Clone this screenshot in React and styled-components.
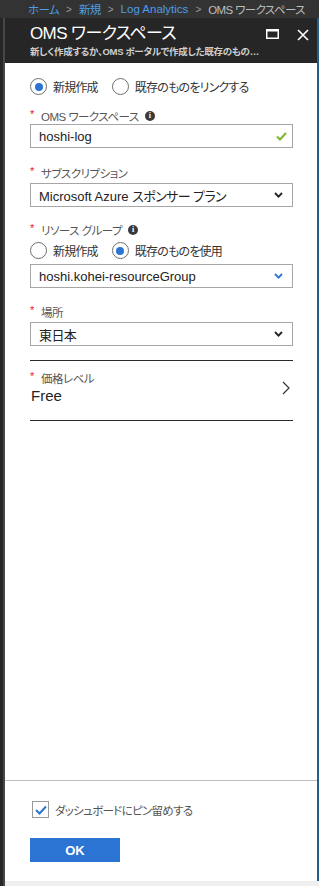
import React from "react";
import styled, { createGlobalStyle } from "styled-components";

const GlobalStyle = createGlobalStyle`
	html, body {
		margin: 0;
		padding: 0;
		background: #ffffff;
	}
	body {
		font-family: "Liberation Sans", "Noto Sans CJK JP", sans-serif;
		font-feature-settings: "palt";
	}
	* {
		box-sizing: border-box;
	}
`;

const Page = styled.div`
	width: 319px;
	height: 886px;
	display: flex;
	flex-direction: column;
	overflow: hidden;
	background: #f0f0f0;
`;

const Breadcrumb = styled.div`
	height: 18px;
	flex: none;
	display: flex;
	align-items: center;
	gap: 7px;
	padding-left: 28px;
	background: #333333;
	font-size: 11.5px;
	white-space: nowrap;
	overflow: hidden;
	color: #bdbdbd;
`;

const Crumb = styled.span`
	color: ${(p) => (p.$current ? "#bdbdbd" : "#4d9de8")};
	letter-spacing: ${(p) => (p.$jp ? "-0.6px" : "0")};
`;

const Sep = styled.span`
	color: #9a9a9a;
	font-size: 10px;
`;

const Body = styled.div`
	flex: 1;
	display: flex;
	min-height: 0;
`;

const LeftRail = styled.div`
	width: 5px;
	flex: none;
	background: #262626;
	border-right: 2px solid #474747;
`;

const Column = styled.div`
	flex: 1;
	min-width: 0;
	display: flex;
	flex-direction: column;
`;

const Blade = styled.div`
	flex: 1;
	display: flex;
	background: #ffffff;
`;

const BladeInner = styled.div`
	flex: 1;
	min-width: 0;
	display: flex;
	flex-direction: column;
`;

const BlueEdge = styled.div`
	width: 2px;
	flex: none;
	background: #245f8c;
`;

const BottomStrip = styled.div`
	height: 5px;
	flex: none;
	background: #efefef;
`;

const Header = styled.div`
	height: 45px;
	flex: none;
	background: #262626;
	display: flex;
	align-items: flex-start;
	padding: 5px 8px 0 25px;
`;

const TitleBlock = styled.div`
	flex: 1;
	min-width: 0;
`;

const Title = styled.div`
	color: #ffffff;
	font-size: 17px;
	line-height: 22px;
	letter-spacing: -0.6px;
`;

const Subtitle = styled.div`
	color: #cfcfcf;
	font-size: 9.5px;
	line-height: 14px;
	font-weight: 700;
	letter-spacing: -0.3px;
	white-space: nowrap;
	overflow: hidden;
`;

const HeaderIcons = styled.div`
	display: flex;
	gap: 18px;
	padding-top: 6px;
`;

const Content = styled.div`
	flex: 1;
	padding: 15px 24px 0 25px;
	display: flex;
	flex-direction: column;
`;

const RadioRow = styled.div`
	display: flex;
	align-items: center;
	gap: 14px;
	height: 17px;
	margin-bottom: ${(p) => p.$mb || 0}px;
`;

const RadioOption = styled.label`
	display: flex;
	align-items: center;
	gap: 6px;
	font-size: 12px;
	letter-spacing: -0.8px;
	color: #333333;
`;

const RadioCircle = styled.span`
	width: 17px;
	height: 17px;
	border-radius: 50%;
	border: 1px solid #6e6e6e;
	display: flex;
	align-items: center;
	justify-content: center;
	background: #fff;
	&::after {
		content: "";
		width: 8px;
		height: 8px;
		border-radius: 50%;
		background: ${(p) => (p.$on ? "#2b74d4" : "transparent")};
	}
`;

const Label = styled.div`
	display: flex;
	align-items: center;
	height: 16px;
	font-size: 11.5px;
	letter-spacing: -0.5px;
	color: #555555;
	margin-bottom: ${(p) => p.$mb ?? 0}px;
`;

const Star = styled.span`
	color: #e81123;
	font-size: 11px;
	width: 11px;
	align-self: flex-start;
	line-height: 12px;
`;

const Info = styled.span`
	width: 10px;
	height: 10px;
	border-radius: 50%;
	background: #3a3a3a;
	color: #fff;
	font-size: 8px;
	font-weight: 700;
	line-height: 10px;
	text-align: center;
	letter-spacing: 0;
	font-family: "Liberation Serif", serif;
	margin-left: 6px;
`;

const Field = styled.div`
	height: 24px;
	flex: none;
	border: 1px solid #a6a6a6;
	display: flex;
	align-items: center;
	padding: 0 9px 0 8px;
	font-size: 13px;
	color: #222222;
	margin-bottom: ${(p) => p.$mb || 0}px;
`;

const FieldText = styled.span`
	flex: 1;
	white-space: nowrap;
	overflow: hidden;
`;

const Jp = styled.span`
	letter-spacing: -0.6px;
`;

const Rule = styled.div`
	height: 1px;
	flex: none;
	background: #2a2a2a;
`;

const PriceRow = styled.div`
	display: flex;
	align-items: center;
	padding: 9px 0 14px;
`;

const PriceText = styled.div`
	flex: 1;
`;

const PriceValue = styled.div`
	font-size: 15px;
	line-height: 20px;
	color: #222;
	padding-left: 1px;
`;

const Footer = styled.div`
	flex: none;
	border-top: 1px solid #bdbdbd;
	padding: 20px 0 19px 25px;
`;

const CheckRow = styled.label`
	display: flex;
	align-items: center;
	gap: 6px;
	padding-left: 2px;
	font-size: 11.5px;
	letter-spacing: -0.7px;
	color: #555555;
	margin-bottom: 20px;
`;

const CheckBox = styled.span`
	width: 17px;
	height: 17px;
	border: 1px solid #9a9a9a;
	display: flex;
	align-items: center;
	justify-content: center;
`;

const OkButton = styled.button`
	width: 90px;
	height: 24px;
	border: none;
	background: #2b74d4;
	color: #ffffff;
	font-family: "Liberation Sans", sans-serif;
	font-weight: 700;
	font-size: 13px;
	padding: 0;
`;

const Chevron = ({ color = "#222" }) => (
	<svg width="9" height="6" viewBox="0 0 9 6">
		<path d="M1 1 L4.5 4.6 L8 1" fill="none" stroke={color} strokeWidth="1.8" />
	</svg>
);

export default function App() {
	return (
		<>
			<GlobalStyle />
			<Page>
				<Breadcrumb>
					<Crumb $jp>ホーム</Crumb>
					<Sep>&gt;</Sep>
					<Crumb $jp>新規</Crumb>
					<Sep>&gt;</Sep>
					<Crumb>Log Analytics</Crumb>
					<Sep>&gt;</Sep>
					<Crumb $current $jp>OMS ワークスペース</Crumb>
				</Breadcrumb>
				<Body>
					<LeftRail />
					<Column>
						<Blade>
							<BladeInner>
								<Header>
									<TitleBlock>
										<Title>OMS ワークスペース</Title>
										<Subtitle>新しく作成するか、OMS ポータルで作成した既存のもの…</Subtitle>
									</TitleBlock>
									<HeaderIcons>
										<svg width="13" height="10" viewBox="0 0 13 10">
											<rect x="0.75" y="1" width="11.5" height="8.25" fill="none" stroke="#fff" strokeWidth="1.5" />
											<rect x="0" y="0" width="13" height="2.5" fill="#fff" />
										</svg>
										<svg width="12" height="12" viewBox="0 0 12 12">
											<path d="M1 1 L11 11 M11 1 L1 11" stroke="#fff" strokeWidth="1.6" />
										</svg>
									</HeaderIcons>
								</Header>
								<Content>
									<RadioRow $mb={13}>
										<RadioOption><RadioCircle $on />新規作成</RadioOption>
										<RadioOption><RadioCircle />既存のものをリンクする</RadioOption>
									</RadioRow>

									<Label><Star>*</Star>OMS ワークスペース<Info>i</Info></Label>
									<Field $mb={17}>
										<FieldText>hoshi-log</FieldText>
										<svg width="11" height="9" viewBox="0 0 11 9" style={{ marginRight: -4 }}>
											<path d="M1 4.5 L4 7.5 L10 1" fill="none" stroke="#7ab929" strokeWidth="2" />
										</svg>
									</Field>

									<Label $mb={2}><Star>*</Star>サブスクリプション</Label>
									<Field $mb={15}>
										<FieldText>Microsoft Azure <Jp>スポンサー プラン</Jp></FieldText>
										<Chevron />
									</Field>

									<Label $mb={4}><Star>*</Star>リソース グループ<Info>i</Info></Label>
									<RadioRow $mb={5}>
										<RadioOption><RadioCircle />新規作成</RadioOption>
										<RadioOption><RadioCircle $on />既存のものを使用</RadioOption>
									</RadioRow>
									<Field $mb={16}>
										<FieldText>hoshi.kohei-resourceGroup</FieldText>
										<Chevron color="#2b74d4" />
									</Field>

									<Label $mb={2}><Star>*</Star>場所</Label>
									<Field $mb={14}>
										<FieldText><Jp>東日本</Jp></FieldText>
										<Chevron />
									</Field>

									<Rule />
									<PriceRow>
										<PriceText>
											<Label><Star>*</Star>価格レベル</Label>
											<PriceValue>Free</PriceValue>
										</PriceText>
										<svg width="8" height="14" viewBox="0 0 8 14" style={{ marginRight: 3 }}>
											<path d="M1 1 L7 7 L1 13" fill="none" stroke="#333" strokeWidth="1.2" />
										</svg>
									</PriceRow>
									<Rule />
								</Content>
								<Footer>
									<CheckRow>
										<CheckBox>
											<svg width="12" height="10" viewBox="0 0 12 10">
												<path d="M1 5 L4.5 8.5 L11 1.5" fill="none" stroke="#2b74d4" strokeWidth="2" />
											</svg>
										</CheckBox>
										ダッシュボードにピン留めする
									</CheckRow>
									<OkButton>OK</OkButton>
								</Footer>
							</BladeInner>
							<BlueEdge />
						</Blade>
						<BottomStrip />
					</Column>
				</Body>
			</Page>
		</>
	);
}
